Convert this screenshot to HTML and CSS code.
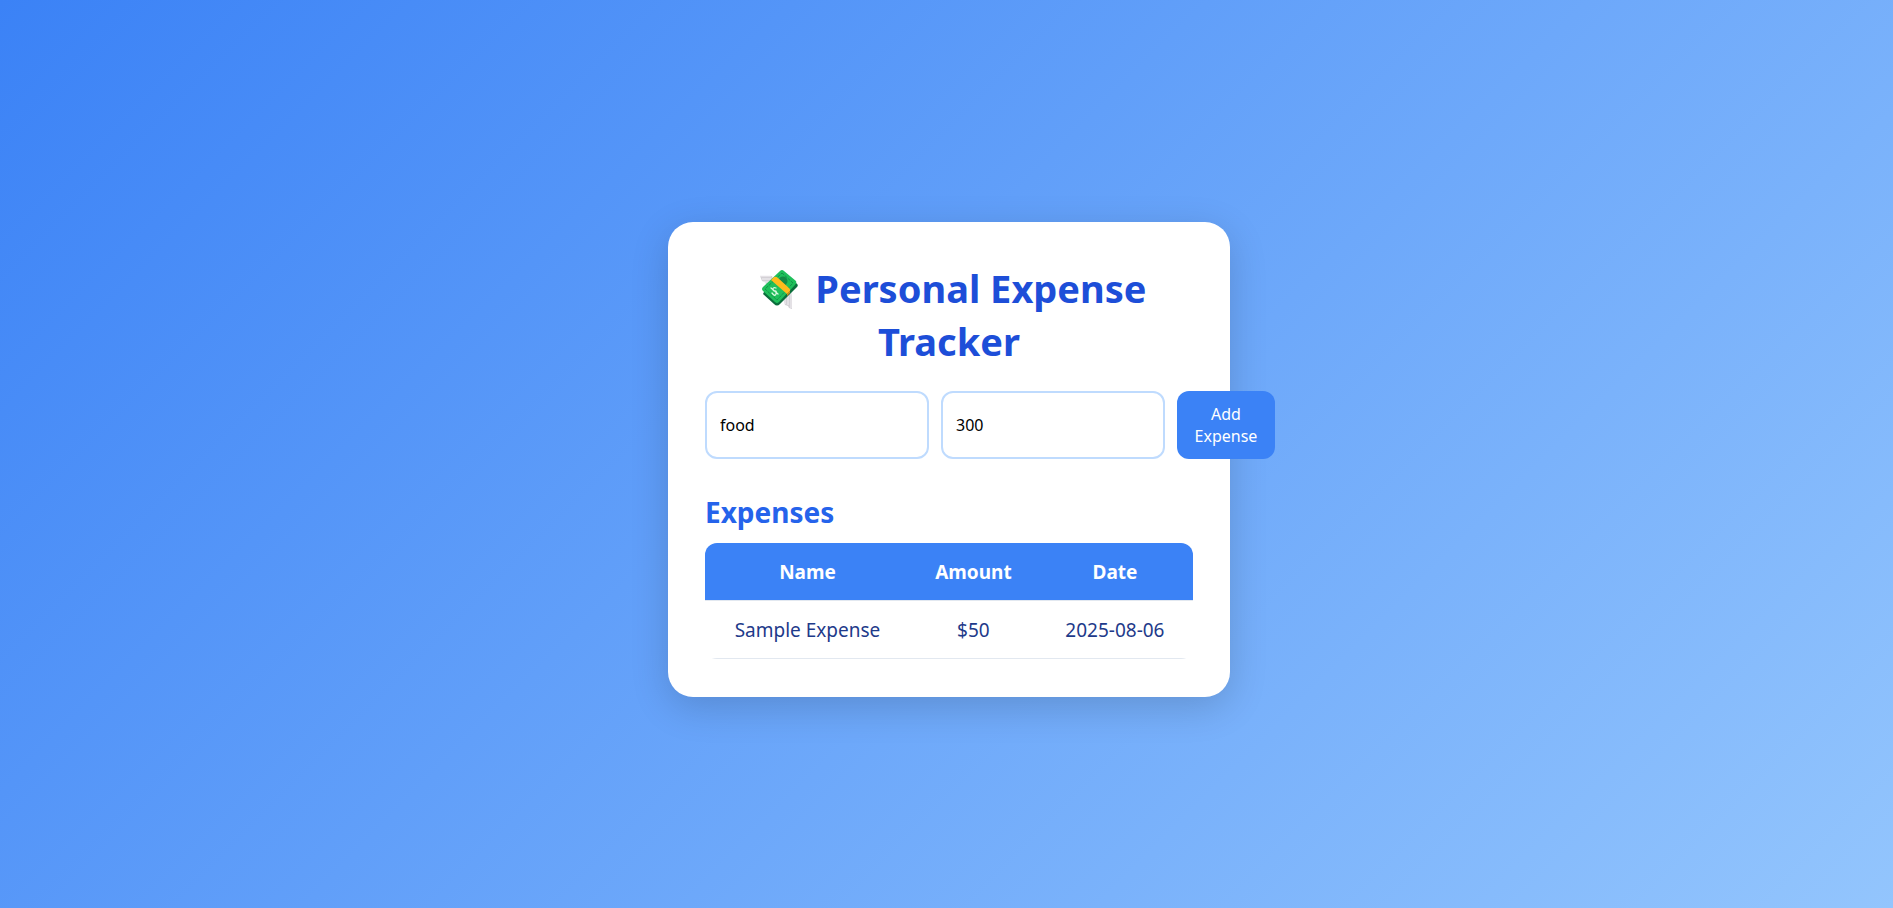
FILE: index.html
```
<!DOCTYPE html>
<html lang="en">
<head>
  <meta charset="utf-8">
  <meta name="viewport" content="width=device-width, initial-scale=1">
  <title>Personal Expense Tracker</title>
  <link rel="stylesheet" href="styles.css">
</head>
<body>
  <main class="card">
    <h1 class="title">
      <svg class="title-icon" viewBox="0 0 40 42" aria-hidden="true">
        <path d="M1 8h12l3 9-9-1-1-2-3-1z" fill="#d4d1d6"/>
        <path d="M1 8h11M3 11h9M5 14h9" stroke="#f3f1f4" stroke-width="1"/>
        <path d="M24 29l8-6 1 5v13l-3-1-1-2-3-1-1-3z" fill="#d4d1d6"/>
        <path d="M32 25v15M29 27v10M26 29v7" stroke="#f3f1f4" stroke-width="1"/>
        <path d="M5 24L37 15Q40 17 38 19L21 36Q18 39 15 36L4 26z" fill="#0b6e3c"/>
        <path d="M21 3Q23 1 25 3L37 13Q38 15 36 17L20 34Q18 36 16 34L4 23Q2 21 4 19z" fill="#1fbf5b"/>
        <path d="M23 5L34 15 18 32 6 21z" fill="none" stroke="#129447" stroke-width="1" stroke-dasharray="3 1"/>
        <circle cx="24" cy="13" r="4.5" fill="#138a45"/>
        <path d="M12 12L15 9Q17 8 19 10L30 20Q32 22 31 23L28 26z" fill="#fdbb1d"/>
        <path d="M28 26l3-3v2l-3 3z" fill="#dc8b12"/>
        <path d="M17 20q-3-1-3 1t2 2 1 3-4-1M12 20l7 6" fill="none" stroke="#d9f7df" stroke-width="1.3" stroke-linecap="round"/>
      </svg>
      Personal Expense Tracker
    </h1>
    <form class="entry">
      <input class="field" type="text" value="food" aria-label="Expense name">
      <input class="field" type="text" inputmode="decimal" value="300" aria-label="Amount">
      <button class="add" type="button">Add Expense</button>
    </form>
    <h2 class="subtitle">Expenses</h2>
    <table class="expenses">
      <thead>
        <tr><th class="col-name" scope="col">Name</th><th class="col-amount" scope="col">Amount</th><th scope="col">Date</th></tr>
      </thead>
      <tbody>
        <tr><td>Sample Expense</td><td>$50</td><td>2025-08-06</td></tr>
      </tbody>
    </table>
  </main>
</body>
</html>
```
FILE: styles.css
```
* {
  box-sizing: border-box;
}

body {
  margin: 0;
  min-height: 100vh;
  padding: 11px 0 0 5px;
  display: flex;
  align-items: center;
  justify-content: center;
  background: linear-gradient(135deg, #3b82f6, #93c5fd);
  font-family: "Segoe UI", "Noto Sans", "Open Sans", sans-serif;
}

.card {
  width: 100%;
  max-width: 562px;
  padding: 40px 37px 38px;
  border-radius: 25px;
  background: #fff;
  box-shadow: 0 10px 38px rgba(0, 0, 0, 0.16);
}

.title {
  margin: 0 0 23px;
  color: #1d4ed8;
  font-size: 38px;
  line-height: 53px;
  text-align: center;
}

.title-icon {
  width: 40px;
  height: 42px;
  margin: 0 6px 0 8px;
  vertical-align: -7px;
}

.entry {
  display: flex;
  gap: 12px;
}

.field {
  flex: 0 0 224px;
  min-width: 0;
  padding: 12px 13px;
  border: 2px solid #bfdbfe;
  border-radius: 12px;
  background: #fff;
  color: #000;
  font: inherit;
  font-size: 16px;
}

.add {
  flex: 0 0 98px;
  padding: 12px 16px;
  border: 0;
  border-radius: 12px;
  background: #3b82f6;
  color: #fff;
  font: inherit;
  font-size: 16px;
  line-height: 22px;
}

.subtitle {
  margin: 34px 0 12px;
  color: #2563eb;
  font-size: 28px;
  line-height: 38px;
}

.expenses {
  width: 100%;
  border-collapse: separate;
  border-spacing: 0;
  border-radius: 12px;
  overflow: hidden;
  font-size: 19px;
  line-height: 25px;
  text-align: center;
}

.expenses th,
.expenses td {
  padding: 17px 0 15px;
  border-bottom: 1px solid #e2e8f0;
}

.expenses th {
  background: #3b82f6;
  background-clip: padding-box;
  color: #fff;
}

.expenses td {
  color: #1e3a8a;
}

.col-name {
  width: 42%;
}

.col-amount {
  width: 26%;
}
```
